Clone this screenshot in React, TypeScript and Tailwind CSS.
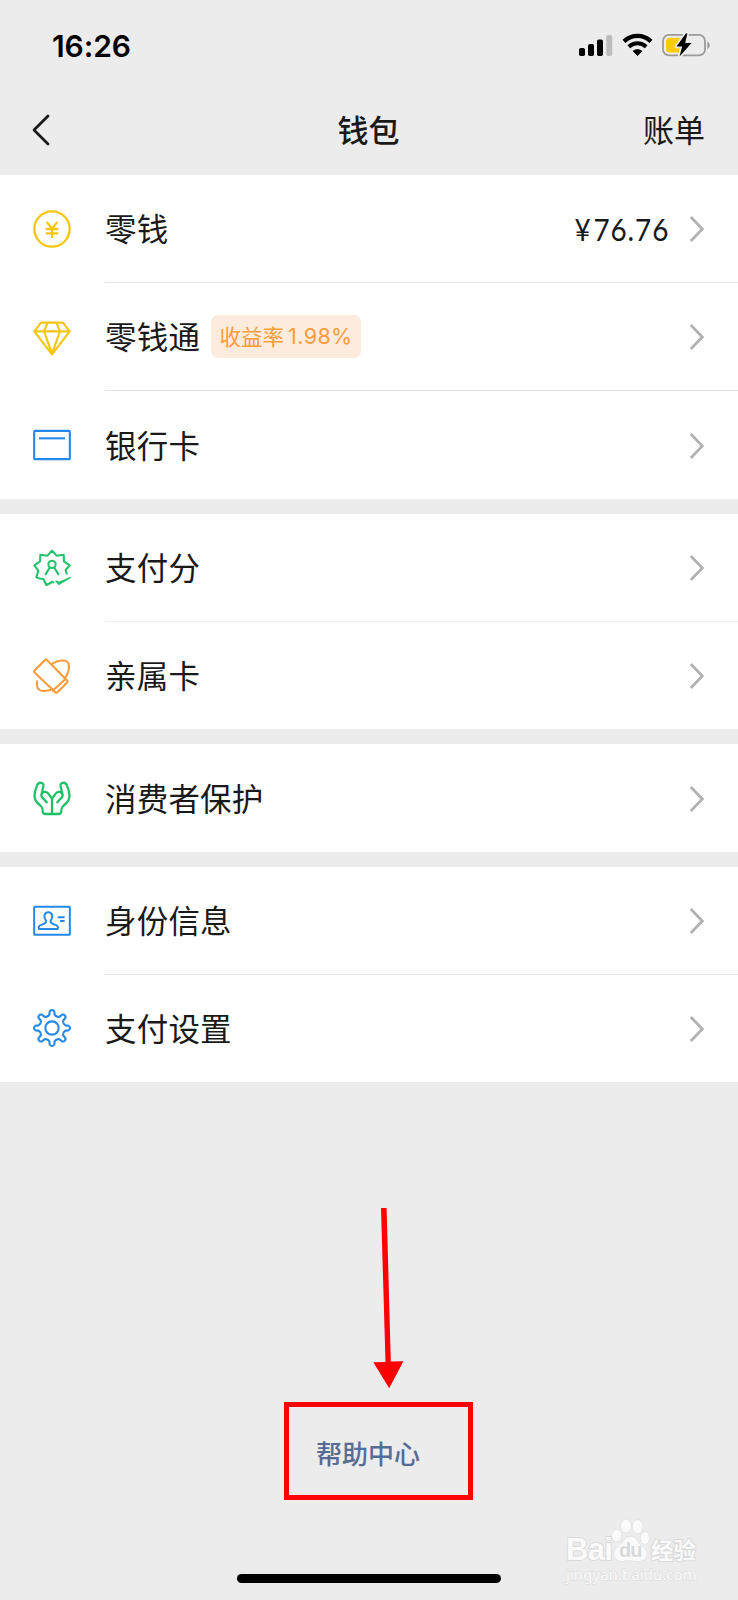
import type { ReactNode } from "react";

const YELLOW = "#f6c50f";
const BLUE = "#2489ea";
const GREEN = "#22c26b";
const ORANGE = "#fa9d3b";

function Glyph({ color, width = 6.3, children }: { color: string; width?: number; children: ReactNode }) {
  return (
    <svg
      className="block h-10 w-10 shrink-0"
      viewBox="0 0 120 120"
      fill="none"
      stroke={color}
      strokeWidth={width}
      strokeLinecap="round"
      strokeLinejoin="round"
    >
      {children}
    </svg>
  );
}

function polar(r: number, deg: number) {
  const a = (deg * Math.PI) / 180;
  return `${(60 + r * Math.sin(a)).toFixed(1)} ${(60 - r * Math.cos(a)).toFixed(1)}`;
}

function gearPath() {
  let d = "";
  for (let i = 0; i < 8; i++) {
    const t = i * 45;
    d += `${i === 0 ? "M" : "L"}${polar(41, t - 11)}L${polar(50, t - 8)}Q${polar(54, t - 6)} ${polar(54, t)}Q${polar(54, t + 6)} ${polar(50, t + 8)}L${polar(41, t + 11)}Q${polar(34, t + 22.5)} ${polar(41, t + 34)}`;
  }
  return d + "Z";
}

const coin = (
  <Glyph color={YELLOW} width={6.8}>
    <circle cx="60" cy="60" r="53" />
    <path d="M44 39 60 59 76 39M41 60H79M41 73H79M60 58V87" strokeLinecap="butt" />
  </Glyph>
);
const diamond = (
  <Glyph color={YELLOW}>
    <path d="M27 17H93L113 43 60 112 7 43ZM7 43H113M47 17 36 43 60 110 84 43 73 17" />
  </Glyph>
);
const card = (
  <Glyph color={BLUE}>
    <rect x="6.5" y="17.5" width="107" height="85" rx="2" />
    <path d="M21 40H99" strokeLinecap="butt" />
  </Glyph>
);
const score = (
  <Glyph color={GREEN} width={6.2}>
    <path d="M64 103 60 102Q50 108 43 111L34 93Q24 93 13 88L19 68 7 52 24 40 25 20 46 23 60 8 74 23 95 20 96 40 113 52 101 66 104 77" />
    <circle cx="60" cy="49" r="11" />
    <path d="M53 59C50 65 45 70 41 79M67 59C70 65 75 70 79 79" />
    <path d="M72 99 80 109 115 89 81 103Z" fill={GREEN} strokeWidth="4" />
  </Glyph>
);
const family = (
  <Glyph color={ORANGE}>
    <path d="M40 14Q42 12 44 14L106 77Q108 80 106 82L76 112Q73 114 70 112L7 52Q5 50 7 47ZM98 74 62 107" />
    <path d="M62 25C82 13 106 14 110 27 113 40 109 55 99 69M15 79C13 102 21 107 34 108 46 108 54 106 61 103" />
  </Glyph>
);
const hands = (
  <Glyph color="#1dc164" width={6.8}>
    <path d="M60 61V107M60 62 49 47C42 38 30 40 28 51 27 59 40 66 44 73M28 51 34 26C37 12 20 10 15 23 4 48 7 68 20 78 30 86 32 89 32 98 32 105 35 108 41 108H79C85 108 88 105 88 98 88 89 90 86 100 78 113 68 116 48 105 23 100 10 83 12 86 26L92 51C90 40 78 38 71 47L60 62M92 51C93 59 80 66 76 73" />
  </Glyph>
);
const identity = (
  <Glyph color={BLUE} width={6}>
    <rect x="6.5" y="17.5" width="107" height="84" rx="2" />
    <path d="M21 84C17 76 24 73 30 71 40 67 44 64 42 59 33 48 37 34 49 34 61 34 65 48 56 59 54 64 58 67 68 71 74 73 81 76 77 84ZM77 49H98M84 60H98" strokeLinecap="butt" />
  </Glyph>
);
const gear = (
  <Glyph color={BLUE}>
    <path d={gearPath()} />
    <circle cx="60" cy="60" r="20" />
  </Glyph>
);

interface RowProps {
  icon: ReactNode;
  label: string;
  badge?: string;
  value?: string;
  divider?: string;
}

function Row({ icon, label, badge, value, divider }: RowProps) {
  return (
    <div className="flex min-h-0 flex-1 pl-8">
      <div className="flex w-[73px] items-center">{icon}</div>
      <div className={`flex flex-1 items-center pr-[33px] ${divider ? `border-b ${divider}` : ""}`}>
        <span className="mb-[3px] text-[31.5px] leading-10 tracking-[0.2px] text-[#191919]">{label}</span>
        {badge && (
          <span className="ml-[11px] flex h-[43px] w-[150px] items-center justify-center rounded-[7px] bg-[#fdebdd] text-[#fa9d3b]">
            <span className="pb-px text-[21.5px]">{badge}</span>
            <span className="ml-1 font-[Inter] text-[21.5px] tracking-[0.4px]">1.98%</span>
          </span>
        )}
        <span className="flex-1" />
        {value && (
          <span className="mr-[20px] flex origin-right scale-x-[0.9] font-[Lato] text-[31px] leading-10 tracking-[1px] text-[#191919]">
            <span className="mr-0.5">{value.slice(0, 1)}</span>
            <span>{value.slice(1)}</span>
          </span>
        )}
        <svg className="mt-px block h-7 w-4 shrink-0" viewBox="0 0 16 28" fill="none" stroke="#b2b2b2" strokeWidth="2.8">
          <path d="M1.8 2 13.3 14 1.8 26" />
        </svg>
      </div>
    </div>
  );
}

function StatusIcons() {
  return (
    <svg className="block h-[26px] w-[134px]" viewBox="0 0 134 26">
      <rect x="1" y="16" width="6" height="8" rx="1.8" />
      <rect x="10" y="12" width="6" height="12" rx="1.8" />
      <rect x="19" y="7.5" width="6" height="16.5" rx="1.8" />
      <rect x="28.2" y="3" width="6" height="21" rx="1.8" fill="#bdbdbd" />
      <g fill="none" stroke="#000" strokeWidth="4.4">
        <path d="M46 9.3C54 2.1 65 2.1 73 9.3" />
        <path d="M50.8 14.7C56 10.1 63 10.1 68.2 14.7" strokeWidth="4" />
      </g>
      <path d="M59.5 24 54.6 19.1C57.5 16.5 61.5 16.5 64.4 19.1Z" />
      <rect x="85" y="2.8" width="42" height="20.6" rx="6" fill="none" stroke="#9b9b9b" strokeWidth="1.8" />
      <rect x="88" y="5.8" width="17" height="14.6" rx="3.5" fill="#fdcb0c" />
      <path d="M129.3 9.5V16.9C132.6 15.5 132.6 10.9 129.3 9.5Z" fill="#9b9b9b" />
      <path d="M107.8 1.5 98.5 14.5H104.2L101.5 24.6 113.6 11.1H107.2L109.4 1.5Z" stroke="#ececec" strokeWidth="3.4" paintOrder="stroke" strokeLinejoin="round" />
    </svg>
  );
}

function Watermark() {
  return (
    <div className="absolute left-[566px] top-[1519px] flex h-[70px] w-[134px] flex-col text-[#fafafa] [-webkit-text-stroke:1.8px_#d9d9d9] [paint-order:stroke_fill]">
      <div className="flex h-[45px] items-end">
        <span className="w-[46px] font-['Liberation_Sans'] text-[31px] font-bold leading-[28px] tracking-[-0.7px]">Bai</span>
        <div className="relative h-[46px] w-[38px]">
          <svg className="block h-[46px] w-[38px]" viewBox="0 0 38 46" fill="#fafafa" stroke="#d9d9d9" strokeWidth="1">
            <ellipse cx="4.7" cy="17.5" rx="4.6" ry="6" />
            <ellipse cx="14" cy="8" rx="5" ry="6.8" />
            <ellipse cx="25.6" cy="8.5" rx="5" ry="6.6" />
            <ellipse cx="33" cy="20" rx="4.5" ry="6" />
            <path d="M18.5 18.5C24 18.5 25 24 30 28 37 33 36 43 27 43 21 43 17 42 11 43 1 43.5 0 33 6 29 12 24 13 18.5 18.5 18.5Z" />
          </svg>
          <span className="absolute left-[7px] top-[20px] font-['Liberation_Sans'] text-[20px] font-bold leading-6 tracking-[-1px] text-[#d9d9d9] [-webkit-text-stroke:0px]">du</span>
        </div>
        <span className="ml-px text-[22.5px] font-bold leading-[30px]">经验</span>
      </div>
      <span className="mt-px font-['Noto_Sans'] text-[15px] leading-[18px] tracking-[0.05px] [-webkit-text-stroke:1px_#dadada]">jingyan.baidu.com</span>
    </div>
  );
}

export default function App() {
  return (
    <div className="relative flex h-[1600px] w-[738px] flex-col overflow-hidden bg-[#ececec] font-['Noto_Sans_CJK_SC',sans-serif]">
      <div className="flex h-[90px] items-center justify-between pl-[52px] pr-[26px]">
        <span className="pt-px font-[Inter] text-[30px] font-semibold leading-10 tracking-[-0.1px] text-black">16:26</span>
        <StatusIcons />
      </div>
      <header className="grid h-[85px] grid-cols-3 items-center pb-[5px] pl-[32px] pr-[33px] text-[31px] leading-10 text-[#191919]">
        <svg className="block h-8 w-[18px]" viewBox="0 0 18 32" fill="none" stroke="#191919" strokeWidth="2.8" strokeLinecap="round" strokeLinejoin="round">
          <path d="M16 2 2 16 16 30" />
        </svg>
        <h1 className="pb-[2px] text-center font-medium">钱包</h1>
        <span className="pb-[2px] text-right">账单</span>
      </header>
      <main className="flex flex-col gap-[15px]">
        <section className="flex h-[324px] flex-col bg-white">
          <Row icon={coin} label="零钱" value="¥76.76" divider="border-[#e7e7e7]" />
          <Row icon={diamond} label="零钱通" badge="收益率" divider="border-[#e2e2e2]" />
          <Row icon={card} label="银行卡" />
        </section>
        <section className="flex h-[215px] flex-col bg-white">
          <Row icon={score} label="支付分" divider="border-[#f1f1f1]" />
          <Row icon={family} label="亲属卡" />
        </section>
        <section className="flex h-[108px] flex-col bg-white">
          <Row icon={hands} label="消费者保护" />
        </section>
        <section className="flex h-[215px] flex-col bg-white">
          <Row icon={identity} label="身份信息" divider="border-[#e5e5e5]" />
          <Row icon={gear} label="支付设置" />
        </section>
      </main>
      <div className="flex flex-1 flex-col items-center justify-end pb-[17px]">
        <a className="mb-[101px] mr-[2px] text-[26px] font-medium leading-10 text-[#576b95]">帮助中心</a>
        <div className="h-[9px] w-[264px] rounded-full bg-black" />
      </div>
      <svg className="absolute left-[370px] top-[1205px] h-[186px] w-[36px]" viewBox="0 0 36 186" fill="#fe0000">
        <path d="M11 3H16.6L20.8 156.5 33.4 156.3 19.2 183.3 3.3 157.2 15.5 157Z" />
      </svg>
      <div className="absolute left-[284px] top-[1402px] h-[98px] w-[189px] border-[5px] border-[#fe0000]" />
      <Watermark />
    </div>
  );
}
